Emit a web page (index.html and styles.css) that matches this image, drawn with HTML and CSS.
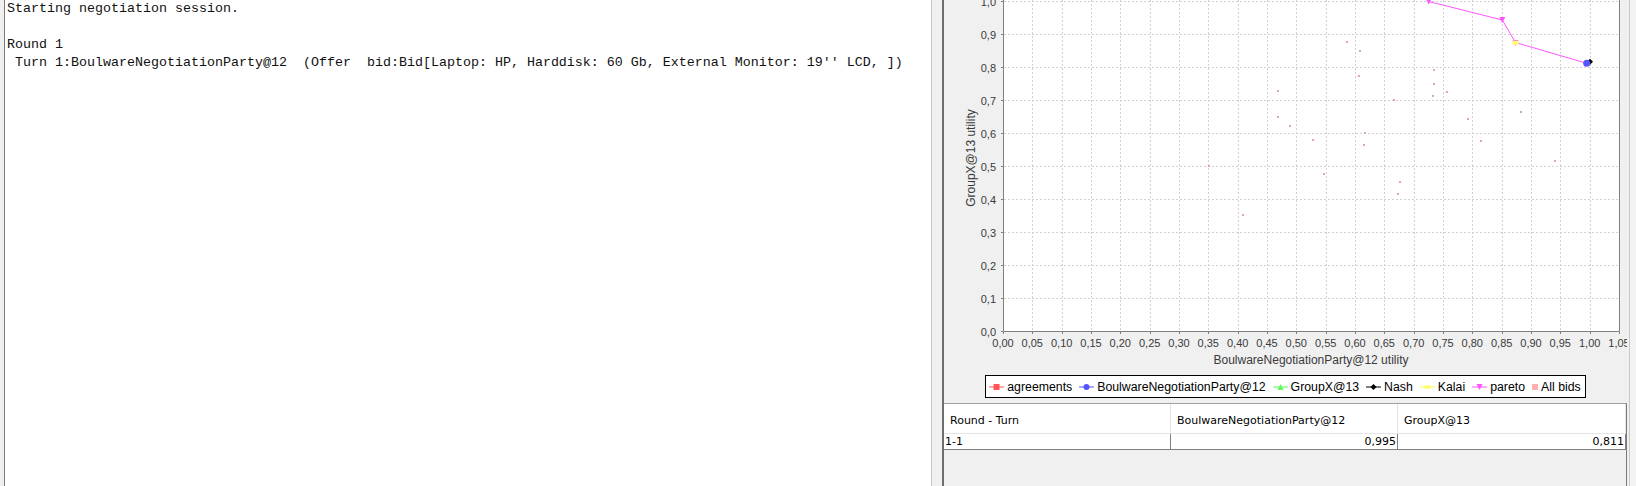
FILE: index.html
```html
<!DOCTYPE html>
<html>
<head>
<meta charset="utf-8">
<link rel="stylesheet" href="styles.css">
</head>
<body>
<div class="app">
  <div class="left">
    <div class="log"><pre>Starting negotiation session.

Round 1
 Turn 1:BoulwareNegotiationParty@12  (Offer  bid:Bid[Laptop: HP, Harddisk: 60 Gb, External Monitor: 19'' LCD, ])</pre></div>
  </div>
  <div class="divider"></div>
  <div class="right">
    <div class="chart-panel">
      <svg class="chart" width="683" height="375" viewBox="0 0 683 375">
        <rect x="59" y="-20" width="616" height="351.5" fill="#ffffff"/>
        <path class="grid" d="M88.5 -20V331 M118.5 -20V331 M147.5 -20V331 M176.5 -20V331 M206.5 -20V331 M235.5 -20V331 M264.5 -20V331 M294.5 -20V331 M323.5 -20V331 M352.5 -20V331 M382.5 -20V331 M411.5 -20V331 M440.5 -20V331 M470.5 -20V331 M499.5 -20V331 M528.5 -20V331 M558.5 -20V331 M587.5 -20V331 M616.5 -20V331 M646.5 -20V331
          M60 298.5H675 M60 265.5H675 M60 232.5H675 M60 199.5H675 M60 166.5H675 M60 133.5H675 M60 100.5H675 M60 67.5H675 M60 34.5H675 M60 1.5H675"/>
        <path class="axis" d="M59.5 -20V331.5H675.5V-20 M57 298.5H59 M57 265.5H59 M57 232.5H59 M57 199.5H59 M57 166.5H59 M57 133.5H59 M57 100.5H59 M57 67.5H59 M57 34.5H59 M57 1.5H59 M57 331.5H59
          M59.5 332V334 M88.5 332V334 M118.5 332V334 M147.5 332V334 M176.5 332V334 M206.5 332V334 M235.5 332V334 M264.5 332V334 M294.5 332V334 M323.5 332V334 M352.5 332V334 M382.5 332V334 M411.5 332V334 M440.5 332V334 M470.5 332V334 M499.5 332V334 M528.5 332V334 M558.5 332V334 M587.5 332V334 M616.5 332V334 M646.5 332V334 M675.5 332V334"/>
        <g class="ticks" text-anchor="end">
          <text x="52" y="5.5">1,0</text>
          <text x="52" y="38.5">0,9</text>
          <text x="52" y="71.5">0,8</text>
          <text x="52" y="104.5">0,7</text>
          <text x="52" y="137.5">0,6</text>
          <text x="52" y="170.5">0,5</text>
          <text x="52" y="203.5">0,4</text>
          <text x="52" y="236.5">0,3</text>
          <text x="52" y="269.5">0,2</text>
          <text x="52" y="302.5">0,1</text>
          <text x="52" y="335.5">0,0</text>
        </g>
        <g class="ticks" text-anchor="middle">
          <text x="59" y="346.5">0,00</text>
          <text x="88.3" y="346.5">0,05</text>
          <text x="117.7" y="346.5">0,10</text>
          <text x="147" y="346.5">0,15</text>
          <text x="176.3" y="346.5">0,20</text>
          <text x="205.7" y="346.5">0,25</text>
          <text x="235" y="346.5">0,30</text>
          <text x="264.3" y="346.5">0,35</text>
          <text x="293.7" y="346.5">0,40</text>
          <text x="323" y="346.5">0,45</text>
          <text x="352.3" y="346.5">0,50</text>
          <text x="381.7" y="346.5">0,55</text>
          <text x="411" y="346.5">0,60</text>
          <text x="440.3" y="346.5">0,65</text>
          <text x="469.7" y="346.5">0,70</text>
          <text x="499" y="346.5">0,75</text>
          <text x="528.3" y="346.5">0,80</text>
          <text x="557.7" y="346.5">0,85</text>
          <text x="587" y="346.5">0,90</text>
          <text x="616.3" y="346.5">0,95</text>
          <text x="645.7" y="346.5">1,00</text>
          <text x="675" y="346.5">1,05</text>
        </g>
        <text class="axis-label" x="367" y="363.5" text-anchor="middle">BoulwareNegotiationParty@12 utility</text>
        <text class="axis-label" x="0" y="0" text-anchor="middle" transform="translate(30.5 158) rotate(-90)">GroupX@13 utility</text>
        <g class="bids">
          <rect x="402" y="41" width="2" height="2"/>
          <rect x="415" y="50" width="2" height="2"/>
          <rect x="414" y="75" width="2" height="2"/>
          <rect x="489" y="69" width="2" height="2"/>
          <rect x="489" y="83" width="2" height="2"/>
          <rect x="488" y="95" width="2" height="2"/>
          <rect x="502" y="91" width="2" height="2"/>
          <rect x="333" y="90" width="2" height="2"/>
          <rect x="333" y="116" width="2" height="2"/>
          <rect x="345" y="125" width="2" height="2"/>
          <rect x="449" y="99" width="2" height="2"/>
          <rect x="576" y="111" width="2" height="2"/>
          <rect x="523" y="118" width="2" height="2"/>
          <rect x="368" y="139" width="2" height="2"/>
          <rect x="420" y="132" width="2" height="2"/>
          <rect x="419" y="144" width="2" height="2"/>
          <rect x="536" y="140" width="2" height="2"/>
          <rect x="264" y="165" width="2" height="2"/>
          <rect x="379" y="173" width="2" height="2"/>
          <rect x="455" y="181" width="2" height="2"/>
          <rect x="453" y="193" width="2" height="2"/>
          <rect x="610" y="160" width="2" height="2"/>
          <rect x="298" y="214" width="2" height="2"/>
        </g>
        <polyline points="484.7,1.5 558.3,20 571.5,42.5 642.7,63.3" fill="none" stroke="#ff55ff" stroke-width="1"/>
        <g fill="#ff55ff">
          <polygon points="481.7,-1.5 487.7,-1.5 484.7,4.5"/>
          <polygon points="555.3,17 561.3,17 558.3,23"/>
          <polygon points="568.5,40 574.5,40 571.5,46"/>
        </g>
        <rect x="568.5" y="40.7" width="6" height="4" fill="#ffff66"/>
        <polygon points="646,58.7 649,61.7 646,64.7 643,61.7" fill="#000"/>
        <circle cx="642.7" cy="63.3" r="3.5" fill="#5555ff"/>
      </svg>
      <div class="legend-row">
        <div class="legend">
          <div class="legend-item">
            <svg width="15" height="8" viewBox="0 0 15 8"><path d="M0 4H15" stroke="#ff5555"/><rect x="4.5" y="1" width="6" height="6" fill="#ff5555"/></svg>
            <span>agreements</span>
          </div>
          <div class="legend-item">
            <svg width="15" height="8" viewBox="0 0 15 8"><path d="M0 4H15" stroke="#5555ff"/><circle cx="7.5" cy="4" r="3" fill="#5555ff"/></svg>
            <span>BoulwareNegotiationParty@12</span>
          </div>
          <div class="legend-item">
            <svg width="15" height="8" viewBox="0 0 15 8"><path d="M0 4H15" stroke="#55ff55"/><polygon points="7.5,1 10.5,7 4.5,7" fill="#55ff55"/></svg>
            <span>GroupX@13</span>
          </div>
          <div class="legend-item">
            <svg width="15" height="8" viewBox="0 0 15 8"><path d="M0 4H15" stroke="#000"/><polygon points="7.5,1 10.5,4 7.5,7 4.5,4" fill="#000"/></svg>
            <span>Nash</span>
          </div>
          <div class="legend-item">
            <svg width="15" height="8" viewBox="0 0 15 8"><path d="M0 4H15" stroke="#ffff55"/><rect x="4.5" y="2.5" width="6" height="3" fill="#ffff55"/></svg>
            <span>Kalai</span>
          </div>
          <div class="legend-item">
            <svg width="15" height="8" viewBox="0 0 15 8"><path d="M0 4H15" stroke="#ff55ff"/><polygon points="4.5,1 10.5,1 7.5,7" fill="#ff55ff"/></svg>
            <span>pareto</span>
          </div>
          <div class="legend-item">
            <svg width="6" height="8" viewBox="0 0 6 8"><rect x="0" y="1" width="6" height="6" fill="#ffafaf"/></svg>
            <span>All bids</span>
          </div>
        </div>
      </div>
    </div>
    <div class="table-wrap">
      <div class="thead">
        <div class="th">Round - Turn</div>
        <div class="th">BoulwareNegotiationParty@12</div>
        <div class="th">GroupX@13</div>
      </div>
      <div class="trow">
        <div class="td">1-1</div>
        <div class="td num">0,995</div>
        <div class="td num">0,811</div>
      </div>
    </div>
  </div>
  <div class="edge"></div>
</div>
</body>
</html>
```
FILE: styles.css
```css
html, body {
  margin: 0;
  padding: 0;
}
body {
  width: 1636px;
  height: 486px;
  overflow: hidden;
  background: #f0f0f0;
  font-family: "Liberation Sans", Arial, sans-serif;
}
.app {
  display: flex;
  height: 486px;
}
.left {
  width: 928px;
  padding-left: 4px;
  height: 100%;
  flex: none;
}
.log {
  box-sizing: border-box;
  height: 100%;
  background: #ffffff;
  border-left: 1px solid #7b7b7b;
  border-right: 1px solid #c6c6c6;
  padding-left: 2px;
  overflow: hidden;
}
.log pre {
  margin: 0;
  font-family: "Liberation Mono", "Courier New", monospace;
  font-size: 13.33px;
  line-height: 18px;
  color: #111;
}
.divider {
  width: 10px;
  flex: none;
}
.right {
  width: 685px;
  flex: none;
  border-left: 2px solid #6e6e6e;
  border-right: 1px solid #c9c9c9;
  display: flex;
  flex-direction: column;
}
.edge {
  flex: 1;
  background: #f3f3f3;
}
.chart-panel {
  width: 683px;
  height: 403px;
  display: flex;
  flex-direction: column;
  flex: none;
}
.chart {
  display: block;
  overflow: hidden;
}
.grid {
  fill: none;
  stroke: #d2d2d2;
  stroke-width: 1;
  stroke-dasharray: 2 2;
}
.axis {
  fill: none;
  stroke: #808080;
  stroke-width: 1;
}
.ticks {
  font-family: "Liberation Sans", Arial, sans-serif;
  font-size: 11px;
  fill: #3a3a3a;
}
.axis-label {
  font-family: "Liberation Sans", Arial, sans-serif;
  font-size: 12px;
  fill: #3a3a3a;
}
.bids rect {
  fill: #dca6b6;
}
.legend-row {
  display: flex;
  justify-content: center;
}
.legend {
  display: flex;
  align-items: center;
  height: 21px;
  border: 1px solid #000;
  background: #fff;
  padding: 0 4px 0 3px;
  font-size: 12.3px;
  color: #000;
}
.legend-item {
  display: flex;
  align-items: center;
  gap: 3px;
  margin-right: 7px;
}
.legend-item:last-child {
  margin-right: 0;
}
.legend-item svg {
  display: block;
}
.table-wrap {
  flex: 1;
  width: 682px;
  border-top: 1px solid #a0a0a0;
  border-right: 1px solid #7a7a7a;
  background: #f0f0f0;
}
.thead, .trow {
  display: grid;
  grid-template-columns: 227px 227px 228px;
}
.thead {
  height: 29px;
  background: #fff;
  border-bottom: 1px solid #e4e4e4;
}
.th {
  box-sizing: border-box;
  border-right: 1px solid #e4e4e4;
  padding: 4px 0 0 6px;
  display: flex;
  align-items: center;
  font-family: "DejaVu Sans", Tahoma, sans-serif;
  font-size: 11px;
  color: #000;
}
.trow {
  height: 15px;
  background: #fff;
  border-bottom: 1px solid #808080;
}
.td {
  box-sizing: border-box;
  border-right: 1px solid #808080;
  padding: 0 1px;
  font-family: "DejaVu Sans", Tahoma, sans-serif;
  font-size: 11px;
  line-height: 15px;
  color: #000;
}
.td.num {
  text-align: right;
}
```
